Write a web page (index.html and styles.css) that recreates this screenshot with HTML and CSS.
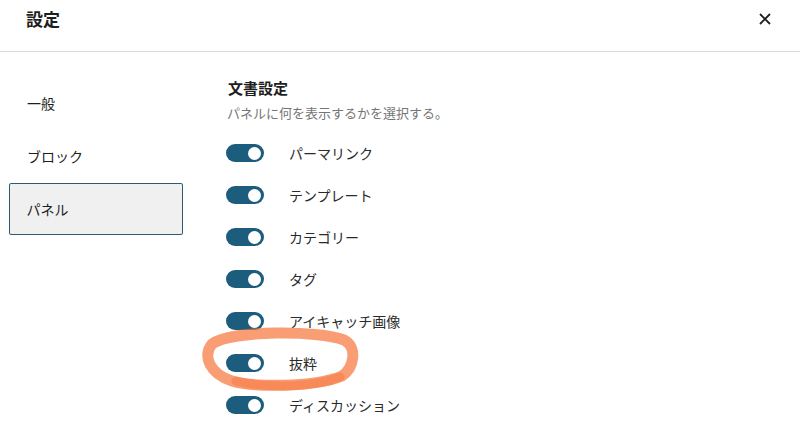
FILE: index.html
```html
<!DOCTYPE html>
<html lang="ja">
<head>
<meta charset="utf-8">
<link rel="stylesheet" href="styles.css">
</head>
<body>
<div class="modal">
  <header class="header">
    <h1 class="title">設定</h1>
    <button class="close" aria-label="閉じる">
      <svg width="14" height="14" viewBox="0 0 14 14"><path d="M2 2 L12 12 M12 2 L2 12" stroke="#1e1e1e" stroke-width="1.8" fill="none"/></svg>
    </button>
  </header>
  <div class="body">
    <nav class="sidebar">
      <div class="tab">一般</div>
      <div class="tab">ブロック</div>
      <div class="tab active">パネル</div>
    </nav>
    <section class="content">
      <h2 class="section-title">文書設定</h2>
      <p class="desc">パネルに何を表示するかを選択する。</p>
      <ul class="list">
        <li class="row"><span class="toggle"><span class="knob"></span></span><span class="label">パーマリンク</span></li>
        <li class="row"><span class="toggle"><span class="knob"></span></span><span class="label">テンプレート</span></li>
        <li class="row"><span class="toggle"><span class="knob"></span></span><span class="label">カテゴリー</span></li>
        <li class="row"><span class="toggle"><span class="knob"></span></span><span class="label">タグ</span></li>
        <li class="row"><span class="toggle"><span class="knob"></span></span><span class="label">アイキャッチ画像</span></li>
        <li class="row"><span class="toggle"><span class="knob"></span></span><span class="label">抜粋</span></li>
        <li class="row"><span class="toggle"><span class="knob"></span></span><span class="label">ディスカッション</span></li>
      </ul>
    </section>
  </div>
  <svg class="annotation" width="800" height="434" viewBox="0 0 800 434">
    <path d="M212 344 C232 330 318 330 344 340 C358 347 354 368 342 376 C312 388 252 387 232 381 C210 374 202 356 212 344 Z"
      fill="none" stroke="#f7733a" stroke-opacity="0.7" stroke-width="11" stroke-linejoin="round"/>
    <path d="M236 381 C270 389 316 387 340 377" fill="none" stroke="#f7733a" stroke-opacity="0.45" stroke-width="9" stroke-linecap="round"/>
  </svg>
</div>
</body>
</html>
```
FILE: styles.css
```css
* { box-sizing: border-box; }
html, body {
  margin: 0;
  padding: 0;
  background: #fff;
  width: 800px;
  height: 434px;
  overflow: hidden;
  font-family: "Noto Sans CJK JP", "Noto Sans", sans-serif;
  color: #1e1e1e;
}
.modal { position: relative; width: 800px; height: 434px; }
.header {
  height: 52px;
  display: flex;
  align-items: center;
  justify-content: space-between;
  padding: 0 28px 0 26px;
  border-bottom: 1px solid #dcdcdc;
}
.title {
  margin: 0 0 14px;
  font-size: 17px;
  font-weight: 700;
  line-height: 1;
}
.close {
  border: 0;
  background: none;
  padding: 0;
  width: 14px;
  height: 14px;
  margin-bottom: 14px;
  display: flex;
}
.body { display: flex; }
.sidebar {
  width: 210px;
  padding: 24px 0 0 9px;
  display: flex;
  flex-direction: column;
}
.tab {
  width: 174px;
  height: 53px;
  display: flex;
  align-items: center;
  padding-left: 18px;
  font-size: 14px;
  color: #1e1e1e;
}
.tab.active {
  height: 52px;
  margin-top: 1px;
  background: #f0f0f0;
  border: 1.5px solid #2c5a73;
  border-radius: 2px;
  padding-left: 16.5px;
}
.content { padding-left: 16px; padding-top: 25px; }
.section-title {
  margin: 0 0 0 2px;
  font-size: 15px;
  font-weight: 700;
  line-height: 22px;
}
.desc {
  margin: 5px 0 0 1px;
  font-size: 13px;
  color: #757575;
  line-height: 18px;
}
.list { list-style: none; margin: 10px 0 0; padding: 0; }
.row {
  height: 42px;
  display: flex;
  align-items: center;
  font-size: 14px;
}
.toggle {
  width: 38px;
  height: 18px;
  border-radius: 9px;
  background: #1c5c7c;
  display: flex;
  align-items: center;
  justify-content: flex-end;
  padding-right: 3px;
}
.knob {
  width: 13px;
  height: 13px;
  border-radius: 50%;
  background: #fff;
}
.label { margin-left: 25px; color: #2a2a2a; }
.annotation {
  position: absolute;
  left: 0;
  top: 0;
  pointer-events: none;
}
```
